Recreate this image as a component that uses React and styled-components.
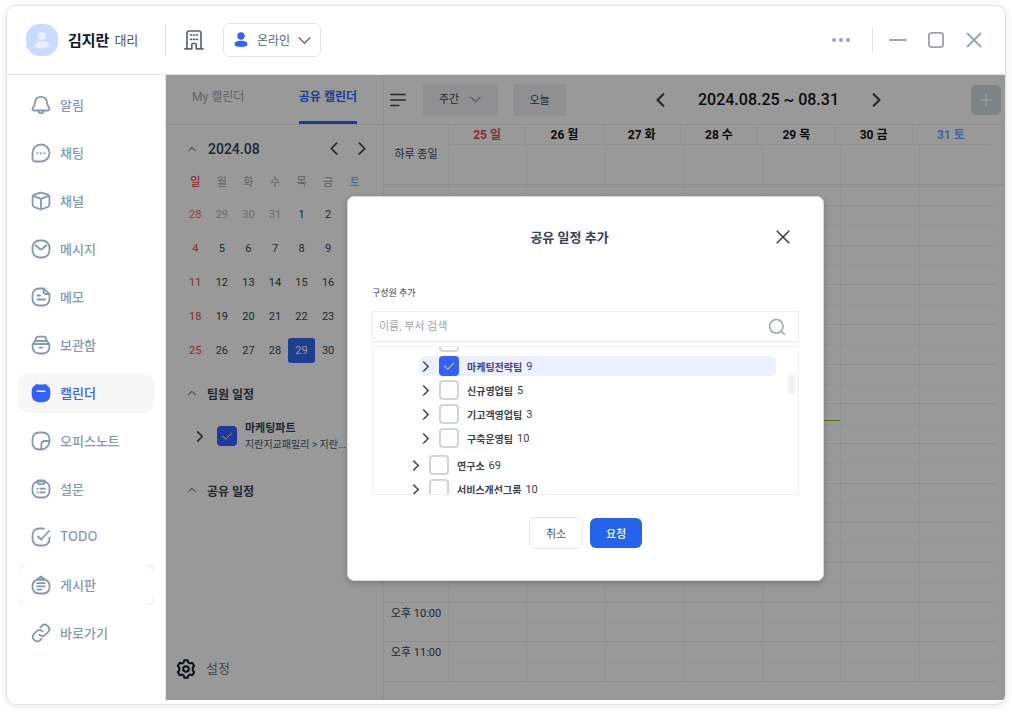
import React, { useState } from "react";
import styled, { createGlobalStyle } from "styled-components";

const NAV = [
  { id: "alarm", label: "알림" },
  { id: "chat", label: "채팅" },
  { id: "channel", label: "채널" },
  { id: "message", label: "메시지" },
  { id: "memo", label: "메모" },
  { id: "archive", label: "보관함" },
  { id: "calendar", label: "캘린더" },
  { id: "note", label: "오피스노트" },
  { id: "survey", label: "설문" },
  { id: "todo", label: "TODO" },
  { id: "board", label: "게시판", framed: true },
  { id: "link", label: "바로가기" },
];

const WEEKDAYS = ["일", "월", "화", "수", "목", "금", "토"];

const WEEKS = [
  [28, 29, 30, 31, 1, 2, 3],
  [4, 5, 6, 7, 8, 9, 10],
  [11, 12, 13, 14, 15, 16, 17],
  [18, 19, 20, 21, 22, 23, 24],
  [25, 26, 27, 28, 29, 30, 31],
];

const HOURS = [12, 1, 2, 3, 4, 5, 6, 7, 8, 9, 10, 11];

const TEAMS = [
  { id: "t0", depth: 1 },
  { id: "t1", name: "마케팅전략팀", count: 9, depth: 1 },
  { id: "t2", name: "신규영업팀", count: 5, depth: 1 },
  { id: "t3", name: "기고객영업팀", count: 3, depth: 1 },
  { id: "t4", name: "구축운영팀", count: 10, depth: 1 },
  { id: "t5", name: "연구소", count: 69, depth: 0, first: true },
  { id: "t6", name: "서비스개선그룹", count: 10, depth: 0 },
];

const dayColor = (i, base) => (i === 0 ? "#e5484d" : i === 6 ? "#6ea8ff" : base);

function NavIcon({ id }) {
  const shapes = {
    alarm: (
      <>
        <path d="M10 1.800c-3.400 0-5.600 2.500-5.900 5.600-.2 2.600-.9 3.700-2.100 5.200-1.100 1.400-.5 2.900 1.400 2.900h13.200c1.900 0 2.500-1.500 1.400-2.900-1.200-1.500-1.900-2.600-2.100-5.200C15.600 4.300 13.400 1.800 10 1.800z" />
        <path d="M7.500 15.800c.2 1.600 1.100 2.500 2.500 2.500s2.300-.9 2.500-2.500" />
      </>
    ),
    chat: (
      <>
        <path d="M10 1.500a8.500 8.500 0 1 1 0 17H4.300c-1.600 0-2.800-1.200-2.800-2.800V10A8.500 8.500 0 0 1 10 1.500z" />
        <path d="M6.500 10.200h.01M10 10.200h.01M13.500 10.200h.01" strokeWidth="2" />
      </>
    ),
    channel: (
      <>
        <path d="M8.600 1.900 3.300 3.700c-1.100.4-1.700 1.200-1.700 2.300v7.600c0 1.100.6 2 1.600 2.400l5.300 2c1 .4 2 .4 3 0l5.300-2c1-.4 1.600-1.300 1.600-2.400V6c0-1.100-.6-1.900-1.700-2.300l-5.300-1.800c-1-.3-1.900-.3-2.800 0z" />
        <path d="m2.300 4.800 7.700 3 7.700-3M10 7.800v10.400" />
      </>
    ),
    message: (
      <>
        <rect x="1.500" y="1.500" width="17" height="17" rx="7" />
        <path d="m4.600 6.200 4 3.500c.8.700 2 .7 2.800 0l4-3.500" />
      </>
    ),
    memo: (
      <>
        <path d="M12.500 1.500H8.500c-4.500 0-7 2.500-7 7v3c0 4.500 2.500 7 7 7h3c4.500 0 7-2.500 7-7V7.200z" />
        <path d="M12.500 1.700v2.800c0 1.700 1 2.700 2.700 2.700h3M6.500 8.500h2.500M6.500 12.500h7.500" />
      </>
    ),
    archive: (
      <>
        <path d="M1.600 9h16.800v2.500c0 4.500-2.400 7-7 7H8.600c-4.600 0-7-2.500-7-7z" />
        <path d="M2.600 8.500 3.800 6h12.400l1.200 2.500M4.500 5.500l.6-2.600c.2-.8.7-1.300 1.600-1.300h6.600c.9 0 1.400.5 1.600 1.300l.6 2.600M8.600 12.600h2.800" />
      </>
    ),
    note: (
      <>
        <path d="M18.500 10V8.500c0-4.500-2.500-7-7-7h-3c-4.500 0-7 2.500-7 7v3c0 4.500 2.500 7 7 7h1.600c4.600 0 8.400-3.900 8.400-8.500z" />
        <path d="M18.300 10h-4.500c-2.300 0-3.500 1.200-3.500 3.500v4.800" />
      </>
    ),
    survey: (
      <>
        <rect x="1.500" y="2.300" width="17" height="16.200" rx="6.500" />
        <path d="M6.300 2.300c0 2 .9 2.900 2.500 2.900h2.400c1.600 0 2.500-.9 2.500-2.900 0-.5-.3-.8-.8-.8H7.100c-.5 0-.8.3-.8.8zM6.300 9.600h.3M9.200 9.600h4.800M6.300 13.400h.3M9.200 13.400h4.800" />
      </>
    ),
    todo: (
      <>
        <path d="M13 1.700c-.5-.1-1-.2-1.500-.2h-3c-4.500 0-7 2.500-7 7v3c0 4.500 2.500 7 7 7h3c4.500 0 7-2.500 7-7v-1.200" />
        <path d="m6.800 9.300 3.400 3.200 7.800-8.500" />
      </>
    ),
    board: (
      <>
        <rect x="1.500" y="4.500" width="17" height="14" rx="6" />
        <path d="M6.200 4.500 10 1.500l3.800 3zM6.300 8.200h7.400M6.300 11.400h7.400M6.300 14.600h4" />
      </>
    ),
    link: (
      <>
        <path d="M8.300 11.700a4.400 4.400 0 0 0 6.200 0l2.600-2.700a4.400 4.400 0 0 0-6.200-6.200L9.400 4.300" />
        <path d="M11.700 8.300a4.400 4.400 0 0 0-6.200 0L2.900 11a4.400 4.400 0 0 0 6.200 6.200l1.500-1.500" />
      </>
    ),
  };

  if (id === "calendar") {
    return (
      <svg width="20" height="20" viewBox="0 0 20 20" aria-hidden="true">
        <path
          fill="#3360ff"
          d="M5.500.7c.5 0 .9.400.9.900h7.200a.9.9 0 0 1 1.800 0v.5c2.500.9 3.900 3.200 3.900 6.400v2.800c0 4.900-2.900 7.900-7.800 7.900h-3C3.600 19.200.7 16.200.7 11.300V8.500c0-3.200 1.400-5.500 3.900-6.400v-.5c0-.5.4-.9.9-.9z"
        />
        <path d="M6.200 8.200h7.600" stroke="#fff" strokeWidth="1.600" strokeLinecap="round" />
      </svg>
    );
  }
  return (
    <StrokeIcon width="20" height="20" viewBox="0 0 20 20" strokeWidth="1.800" aria-hidden="true">
      {shapes[id]}
    </StrokeIcon>
  );
}

function Chevron({ dir = "right", size = 12, weight = 2 }) {
  const d = {
    right: "M4 1l5 5-5 5",
    left: "M8 1L3 6l5 5",
    up: "M1 8.500l5-5 5 5",
    down: "M1 3.500l5 5 5-5",
  }[dir];
  return (
    <StrokeIcon width={size} height={size} viewBox="0 0 12 12" strokeWidth={weight} aria-hidden="true">
      <path d={d} />
    </StrokeIcon>
  );
}

function Check({ label, ...rest }) {
  return (
    <CheckWrap>
      <input type="checkbox" aria-label={label} {...rest} />
      <StrokeIcon width="12" height="12" viewBox="0 0 12 12" strokeWidth="1" aria-hidden="true">
        <path d="M1.500 6l3.200 3.300 6-6.300" />
      </StrokeIcon>
    </CheckWrap>
  );
}

function TopBar() {
  return (
    <Header>
      <Avatar viewBox="0 0 32 32" aria-hidden="true">
        <circle cx="16" cy="12" r="4" />
        <path d="M9 21.500c0-2.800 3-4.300 7-4.300s7 1.500 7 4.300c0 2-2.500 2.700-7 2.700s-7-.7-7-2.700z" />
      </Avatar>
      <Name>
        김지란 <span>대리</span>
      </Name>
      <Divider $h={32} />
      <PlainButton type="button" aria-label="조직도">
        <StrokeIcon width="20" height="20" viewBox="0 0 20 20" strokeWidth="1.700" aria-hidden="true">
          <path d="M3 18.800V3.200C3 1.800 3.800 1 5.200 1h9.600C16.200 1 17 1.800 17 3.200v15.600M.9 18.800h6.900v-4.500c0-.5.3-.8.8-.8h2.800c.5 0 .8.3.8.8v4.500h6.900" />
          <path d="M6.500 5h1M12.500 5h1M9.500 5h1M6.500 9.300h1M9.500 9.300h1M12.500 9.300h1" />
        </StrokeIcon>
      </PlainButton>
      <StatusBox>
        <svg width="14" height="16" viewBox="0 0 14 16" aria-hidden="true">
          <g fill="#3360ff">
            <circle cx="7" cy="4" r="3.700" />
            <path d="M.6 12c0-2.400 2.800-3.300 6.400-3.300s6.400.9 6.400 3.300c0 2.200-2.600 2.900-6.400 2.900S.6 14.200.6 12z" />
          </g>
        </svg>
        <select aria-label="상태" defaultValue="온라인">
          <option>온라인</option>
          <option>자리비움</option>
        </select>
        <Chevron dir="down" weight={1.200} size={13} />
      </StatusBox>
      <WindowButtons>
        <PlainButton type="button" aria-label="더보기">
          <svg width="18" height="4" viewBox="0 0 18 4" fill="currentColor" aria-hidden="true">
            <circle cx="2" cy="2" r="2" />
            <circle cx="9" cy="2" r="2" />
            <circle cx="16" cy="2" r="2" />
          </svg>
        </PlainButton>
        <Divider $h={24} />
        <PlainButton type="button" aria-label="최소화">
          <StrokeIcon width="18" height="18" viewBox="0 0 18 18" strokeWidth="1.800">
            <path d="M1 9h16" />
          </StrokeIcon>
        </PlainButton>
        <PlainButton type="button" aria-label="최대화">
          <StrokeIcon width="18" height="18" viewBox="0 0 18 18" strokeWidth="1.800">
            <rect x="1.900" y="1.900" width="14.200" height="14.200" rx="2.500" />
          </StrokeIcon>
        </PlainButton>
        <PlainButton type="button" aria-label="닫기">
          <StrokeIcon width="18" height="18" viewBox="0 0 18 18" strokeWidth="1.800">
            <path d="M2.500 2.500l13 13M15.500 2.500l-13 13" />
          </StrokeIcon>
        </PlainButton>
      </WindowButtons>
    </Header>
  );
}

function MiniCalendar() {
  return (
    <>
      <MiniHead>
        <Chevron dir="up" size={8} weight={1.500} />
        <strong>2024.08</strong>
        <PlainButton type="button" aria-label="이전 달">
          <Chevron dir="left" size={13} weight={1.600} />
        </PlainButton>
        <PlainButton type="button" aria-label="다음 달">
          <Chevron size={13} weight={1.600} />
        </PlainButton>
      </MiniHead>
      <MiniTable>
        <thead>
          <tr>
            {WEEKDAYS.map((d, i) => (
              <Weekday key={d} $color={dayColor(i, "#9ca3af")} $bold={i === 0}>
                {d}
              </Weekday>
            ))}
          </tr>
        </thead>
        <tbody>
          {WEEKS.map((week, w) => (
            <tr key={w}>
              {week.map((d, i) => {
                const prev = w === 0 && d > 20;
                return (
                  <Day key={d} $color={dayColor(i, "#374151")} $muted={prev} $today={w === 4 && d === 29}>
                    <span>{d}</span>
                  </Day>
                );
              })}
            </tr>
          ))}
        </tbody>
      </MiniTable>
    </>
  );
}

function SidePanel() {
  return (
    <Panel>
      <Tabs>
        <Tab type="button">My 캘린더</Tab>
        <Tab type="button" $active>
          공유 캘린더
        </Tab>
      </Tabs>
      <MiniCalendar />
      <SectionTitle $top={14}>
        <Chevron dir="up" size={8} weight={1.500} />
        팀원 일정
      </SectionTitle>
      <TeamRow>
        <Chevron size={11} weight={1.700} />
        <Check label="마케팅파트" defaultChecked />
        <TeamText>
          <strong>마케팅파트</strong>
          <span>지란지교패밀리 &gt; 지란...</span>
        </TeamText>
      </TeamRow>
      <SectionTitle $top={25}>
        <Chevron dir="up" size={8} weight={1.500} />
        공유 일정
      </SectionTitle>
      <Settings type="button">
        <StrokeIcon width="20" height="20" viewBox="0 0 20 20" strokeWidth="2" aria-hidden="true">
          <path d="M8.300 1.200h3.400l.6 2.300 1.700 1 2.300-.7 1.900 3.100-1.500 1.800v2.600l1.500 1.800-1.900 3.100-2.300-.7-1.700 1-.6 2.300H8.300l-.6-2.300-1.700-1-2.300.7-1.900-3.100 1.500-1.800V8.700L1.800 6.900l1.900-3.100 2.300.7 1.700-1z" />
          <circle cx="10" cy="10" r="2.800" />
        </StrokeIcon>
        설정
      </Settings>
    </Panel>
  );
}

function Schedule() {
  return (
    <Board>
      <Toolbar>
        <ToolGroup>
          <PlainButton type="button" aria-label="목록">
            <StrokeIcon width="16" height="14" viewBox="0 0 16 14" strokeWidth="1.500">
              <path d="M.8 1.500h14.400M.8 7h14.400M.8 12.500h8" />
            </StrokeIcon>
          </PlainButton>
          <RangeBox>
            <select aria-label="보기" defaultValue="주간">
              <option>주간</option>
              <option>월간</option>
            </select>
            <Chevron dir="down" size={11} weight={1.400} />
          </RangeBox>
          <TodayButton type="button">오늘</TodayButton>
        </ToolGroup>
        <DateNav>
          <PlainButton type="button" aria-label="이전 주">
            <Chevron dir="left" size={14} weight={1.800} />
          </PlainButton>
          <h1>2024.08.25 ~ 08.31</h1>
          <PlainButton type="button" aria-label="다음 주">
            <Chevron size={14} weight={1.800} />
          </PlainButton>
        </DateNav>
        <AddButton type="button" aria-label="일정 추가">
          <StrokeIcon width="14" height="14" viewBox="0 0 14 14" strokeWidth="1.400">
            <path d="M7 1.500v11M1.500 7h11" />
          </StrokeIcon>
        </AddButton>
      </Toolbar>
      <AllDay>
        <AllDayLabel>하루 종일</AllDayLabel>
        <div>
          <DayHeads>
            {WEEKDAYS.map((d, i) => (
              <DayHead key={d} $color={dayColor(i, "#111")}>
                {25 + i} {d}
              </DayHead>
            ))}
          </DayHeads>
          <AllDayCells>
            {WEEKDAYS.map((d) => (
              <Slot key={d} />
            ))}
          </AllDayCells>
        </div>
      </AllDay>
      <Hours>
        <HourRow $partial>
          <HourLabel />
          {WEEKDAYS.map((d) => (
            <Slot key={d} />
          ))}
        </HourRow>
        {HOURS.map((h) => (
          <HourRow key={h}>
            <HourLabel>오후 {h}:00</HourLabel>
            {WEEKDAYS.map((d, i) => (
              <Slot key={d} $split>
                {h === 5 && i === 4 && <NowLine />}
              </Slot>
            ))}
          </HourRow>
        ))}
      </Hours>
    </Board>
  );
}

function ShareDialog() {
  const [picked, setPicked] = useState(["t1"]);
  const toggle = (id) =>
    setPicked((p) => (p.includes(id) ? p.filter((v) => v !== id) : [...p, id]));

  return (
    <Backdrop>
      <Dialog role="dialog" aria-labelledby="share-title">
        <DialogHead>
          <h2 id="share-title">공유 일정 추가</h2>
          <PlainButton type="button" aria-label="닫기">
            <StrokeIcon width="14" height="14" viewBox="0 0 14 14" strokeWidth="1.600">
              <path d="M1.200 1.200l11.600 11.600M12.800 1.200L1.200 12.800" />
            </StrokeIcon>
          </PlainButton>
        </DialogHead>
        <FieldLabel htmlFor="member">구성원 추가</FieldLabel>
        <SearchBox>
          <input id="member" type="text" placeholder="이름, 부서 검색" />
          <StrokeIcon width="18" height="18" viewBox="0 0 18 18" strokeWidth="1.500" aria-hidden="true">
            <circle cx="8.300" cy="8.300" r="6.800" />
            <path d="M13.300 13.300l3.200 3.200" />
          </StrokeIcon>
        </SearchBox>
        <TreeBox>
          <Tree>
            {TEAMS.map((t) => (
              <TreeRow
                key={t.id}
                $depth={t.depth}
                $first={t.first}
                $leaf={!t.name}
                $on={picked.includes(t.id)}
              >
                {t.name && <Chevron size={11} weight={1.600} />}
                <Check
                  label={t.name || "팀"}
                  checked={picked.includes(t.id)}
                  onChange={() => toggle(t.id)}
                />
                {t.name && <strong>{t.name}</strong>}
                {t.name && <span>{t.count}</span>}
              </TreeRow>
            ))}
          </Tree>
          <Thumb />
        </TreeBox>
        <Actions>
          <ActionButton type="button">취소</ActionButton>
          <ActionButton type="button" $primary>
            요청
          </ActionButton>
        </Actions>
      </Dialog>
    </Backdrop>
  );
}

export default function App() {
  const [page, setPage] = useState("calendar");

  return (
    <Page>
      <GlobalStyle />
      <Window>
        <TopBar />
        <Body>
          <Nav>
            {NAV.map((item) => (
              <NavItem key={item.id} $framed={item.framed}>
                <NavLink
                  href={`#${item.id}`}
                  $active={page === item.id}
                  onClick={() => setPage(item.id)}
                >
                  <NavIcon id={item.id} />
                  <span>{item.label}</span>
                </NavLink>
              </NavItem>
            ))}
          </Nav>
          <Content>
            <SidePanel />
            <Schedule />
            <ShareDialog />
          </Content>
        </Body>
      </Window>
    </Page>
  );
}

const GlobalStyle = createGlobalStyle`
  * {
    box-sizing: border-box;
  }
  body {
    margin: 0;
    background: #fff;
    font-family: Roboto, "Noto Sans CJK KR", sans-serif;
    font-size: 11px;
    color: #374151;
    white-space: nowrap;
  }
  button, input, select {
    font: inherit;
    color: inherit;
  }
  svg {
    flex: none;
  }
`;

const StrokeIcon = styled.svg`
  display: block;
  fill: none;
  stroke: currentColor;
  stroke-linecap: round;
  stroke-linejoin: round;
`;

const PlainButton = styled.button`
  display: flex;
  padding: 0;
  border: 0;
  background: none;
  cursor: pointer;
`;

const Page = styled.div`
  display: flex;
  min-height: 100vh;
  padding: 5px 6px 7px;
`;

const Window = styled.div`
  flex: 1;
  display: flex;
  flex-direction: column;
  padding-bottom: 4px;
  border: 1px solid #e3e4e6;
  border-radius: 10px;
  overflow: hidden;
  box-shadow: 0 1px 6px rgba(0, 0, 0, 0.1);
`;

const Header = styled.header`
  display: flex;
  align-items: center;
  height: 69px;
  padding: 0 22px 0 19px;
  border-bottom: 1px solid #e5e7eb;
  color: #5b6678;
`;

const Avatar = styled.svg`
  width: 32px;
  height: 32px;
  border-radius: 14px;
  background: #c9dbff;
  fill: #e8f0ff;
`;

const Name = styled.div`
  display: flex;
  align-items: center;
  gap: 5px;
  width: 97px;
  margin-left: 10px;
  padding-bottom: 2px;
  font-size: 15px;
  font-weight: 700;
  color: #111827;

  span {
    font-size: 13px;
    font-weight: 400;
    color: #4b5563;
  }
`;

const Divider = styled.div`
  width: 1px;
  height: ${(p) => p.$h}px;
  margin-right: 18px;
  background: #e2e4e8;
`;

const StatusBox = styled.label`
  display: flex;
  align-items: center;
  width: 98px;
  height: 34px;
  margin-left: 19px;
  padding: 0 9px 0 10px;
  border: 1px solid #e2e4e8;
  border-radius: 6px;

  select {
    width: 41px;
    margin-left: 9px;
    padding: 2px 0 0;
    border: 0;
    background: none;
    appearance: none;
    font-size: 12px;
  }
`;

const WindowButtons = styled.div`
  display: flex;
  align-items: center;
  gap: 20px;
  margin-left: auto;
  color: #9aa3b5;

  ${Divider} {
    margin: 0 -4px 0 2px;
  }
`;

const Body = styled.div`
  flex: 1;
  display: flex;
`;

const Nav = styled.nav`
  display: flex;
  flex-direction: column;
  gap: 8px;
  width: 159px;
  padding: 10px 11px;
  border-right: 1px solid #e5e7eb;
`;

const NavItem = styled.div`
  background: ${(p) => (p.$framed ? "#f7f7f7" : "none")};
`;

const NavLink = styled.a`
  display: flex;
  align-items: center;
  gap: 9px;
  height: 40px;
  padding-left: 13px;
  border-radius: 12px;
  background: ${(p) => (p.$active ? "#f7f7f7" : "#fff")};
  color: ${(p) => (p.$active ? "#3360ff" : "#8299b2")};
  font-family: Inter, "Noto Sans CJK KR", sans-serif;
  font-size: 13px;
  font-weight: 500;
  text-decoration: none;

  span {
    padding-bottom: 2px;
  }
`;

const Content = styled.main`
  position: relative;
  flex: 1;
  display: flex;
  min-width: 0;
`;

const Panel = styled.section`
  display: flex;
  flex-direction: column;
  width: 218px;
  border-right: 1px solid #f0f0f1;
`;

const Tabs = styled.div`
  display: flex;
  justify-content: space-between;
  height: 50px;
  padding: 0 26px;
  border-bottom: 1px solid #f0f0f1;
`;

const Tab = styled.button`
  padding: 1px 0 3px;
  border: 0;
  border-bottom: 3px solid ${(p) => (p.$active ? "#3360ff" : "transparent")};
  background: none;
  font-size: 12px;
  font-weight: ${(p) => (p.$active ? 700 : 400)};
  line-height: 42px;
  color: ${(p) => (p.$active ? "#3360ff" : "#9ca3af")};
`;

const MiniHead = styled.div`
  display: flex;
  align-items: center;
  gap: 14px;
  height: 47px;
  padding: 0 15px 0 22px;

  strong {
    flex: 1;
    margin-left: -2px;
    font-size: 14px;
    font-weight: 500;
  }
`;

const MiniTable = styled.table`
  margin: 0 15px 0 16px;
  border-collapse: collapse;
  table-layout: fixed;
  text-align: center;
`;

const Weekday = styled.th`
  height: 25px;
  padding: 0 0 7px;
  font-size: 11px;
  font-weight: ${(p) => (p.$bold ? 500 : 400)};
  color: ${(p) => p.$color};
`;

const Day = styled.td`
  height: 34px;
  padding: 0;
  font-size: 11px;
  color: ${(p) => (p.$muted && p.$color === "#374151" ? "#9ca3af" : p.$color)};

  span {
    display: block;
    border-radius: 3px;
    line-height: 25px;
    background: ${(p) => (p.$today ? "#2f67f0" : "none")};
    color: ${(p) => (p.$today ? "#fff" : "inherit")};
    opacity: ${(p) => (p.$muted ? 0.8 : 1)};
  }
`;

const SectionTitle = styled.h3`
  display: flex;
  align-items: center;
  gap: 11px;
  height: 24px;
  margin: ${(p) => p.$top}px 0 0;
  padding-left: 22px;
  font-size: 12px;
  font-weight: 600;
`;

const TeamRow = styled.div`
  display: flex;
  align-items: center;
  margin-top: 14px;
  padding-left: 28px;
  gap: 8px;

  > label {
    margin-left: 4px;
  }
`;

const TeamText = styled.div`
  display: flex;
  flex-direction: column;
  padding-top: 2px;
  line-height: 16px;

  strong {
    font-weight: 600;
  }
  span {
    font-size: 10px;
    color: #4b5563;
  }
`;

const Settings = styled.button`
  display: flex;
  align-items: center;
  gap: 10px;
  margin-top: auto;
  padding: 0 10px 21px;
  border: 0;
  background: none;
  font-size: 13px;
  line-height: 20px;
  color: #6b7280;

  svg {
    color: #111827;
  }
`;

const CheckWrap = styled.label`
  display: grid;
  place-items: center;
  width: 20px;
  height: 20px;
  color: #fff;

  input,
  svg {
    grid-area: 1 / 1;
  }
  svg {
    pointer-events: none;
  }
  input {
    width: 20px;
    height: 20px;
    margin: 0;
    border: 2px solid #cfd5dd;
    border-radius: 4px;
    background: #fff;
    appearance: none;
  }
  input:checked {
    border-color: #3360ff;
    background: #3360ff;
  }
`;

const Board = styled.section`
  flex: 1;
  display: flex;
  flex-direction: column;
  min-width: 0;
  padding-bottom: 18px;
`;

const Toolbar = styled.div`
  display: flex;
  align-items: center;
  justify-content: space-between;
  height: 50px;
  padding: 0 4px 0 6px;
  border-bottom: 1px solid #f0f0f1;
`;

const ToolGroup = styled.div`
  display: flex;
  align-items: center;
`;

const RangeBox = styled.label`
  display: flex;
  align-items: center;
  width: 75px;
  height: 32px;
  margin: 0 15px 0 17px;
  padding: 0 17px 0 16px;
  border-radius: 3px;
  background: #f1f1f5;

  select {
    flex: 1;
    width: 20px;
    padding: 0;
    border: 0;
    background: none;
    appearance: none;
  }
  svg {
    color: #9ca3af;
  }
`;

const TodayButton = styled.button`
  width: 53px;
  height: 32px;
  padding: 0 0 2px;
  border: 0;
  border-radius: 3px;
  background: #f1f1f5;
`;

const DateNav = styled.div`
  display: flex;
  align-items: center;
  gap: 30px;

  h1 {
    margin: 0;
    font-size: 16px;
    font-weight: 500;
    color: #111;
  }
`;

const AddButton = styled.button`
  display: grid;
  place-items: center;
  width: 30px;
  height: 30px;
  padding: 0;
  border: 0;
  border-radius: 5px;
  background: #d3dae0;
  color: #fff;
`;

const AllDay = styled.div`
  display: grid;
  grid-template-columns: 64px 1fr;
  height: 60px;
  border-bottom: 1px solid #f0f0f1;
`;

const AllDayLabel = styled.div`
  display: flex;
  align-items: center;
  justify-content: center;
  padding-bottom: 4px;
`;

const DayHeads = styled.div`
  display: grid;
  grid-template-columns: repeat(7, 1fr);
  height: 20px;
  margin-right: 16px;
  border-bottom: 1px solid #f3f3f4;
`;

const DayHead = styled.div`
  border-left: 1px solid #f3f3f4;
  text-align: center;
  font-size: 12px;
  font-weight: 700;
  line-height: 20px;
  color: ${(p) => p.$color};
`;

const AllDayCells = styled.div`
  display: grid;
  grid-template-columns: repeat(7, 1fr);
  height: 39px;
  margin-right: 8px;
`;

const Hours = styled.div`
  flex: 1;
  display: flex;
  flex-direction: column;
  margin: 1px 8px 0 0;
  border-bottom: 1px solid #f0f0f1;
`;

const HourRow = styled.div`
  flex: ${(p) => (p.$partial ? "0 0 19px" : "1")};
  display: grid;
  grid-template-columns: 64px repeat(7, 1fr);
  border-top: 1px solid #f0f0f1;
`;

const HourLabel = styled.div`
  text-align: center;
  line-height: 21px;
`;

const Slot = styled.div`
  position: relative;
  display: grid;
  grid-template-rows: 1fr 1fr;
  border-left: 1px solid #f3f3f4;

  &::after {
    content: "";
    grid-row: 2;
    border-top: ${(p) => (p.$split ? "1px solid #f8f8f9" : "0")};
  }
`;

const NowLine = styled.div`
  position: absolute;
  top: 40%;
  left: 0;
  right: 0;
  border-top: 1px solid #7cc414;
`;

const Backdrop = styled.div`
  position: absolute;
  inset: 0;
  display: flex;
  align-items: center;
  justify-content: center;
  padding-top: 2px;
  background: rgba(0, 0, 0, 0.4);
`;

const Dialog = styled.div`
  width: 477px;
  max-width: 96%;
  padding: 24px 24px 31px;
  border: 1px solid #d9d9d9;
  border-radius: 7px;
  background: #fff;
  box-shadow: 0 2px 6px rgba(0, 0, 0, 0.2);
`;

const DialogHead = styled.div`
  display: flex;
  align-items: center;
  height: 32px;
  padding-right: 9px;

  h2 {
    flex: 1;
    margin: 0;
    padding: 0 9px 2px 0;
    text-align: center;
    font-size: 13px;
    font-weight: 600;
  }
`;

const FieldLabel = styled.label`
  display: block;
  margin: 32px 0 10px;
  font-size: 9px;
  line-height: 16px;
`;

const SearchBox = styled.div`
  display: flex;
  align-items: center;
  height: 31px;
  margin-bottom: 4px;
  padding: 0 12px 0 6px;
  border: 1px solid #ececee;
  box-shadow: 0 1px 2px rgba(0, 0, 0, 0.03);
  color: #9ca3af;

  input {
    flex: 1;
    padding: 0;
    border: 0;
    outline: 0;
    color: #374151;
  }
  input::placeholder {
    color: #9ca3af;
  }
`;

const TreeBox = styled.div`
  position: relative;
  height: 149px;
  border: 1px solid #f1f1f3;
  overflow: hidden;
`;

/* list is scrolled part-way through its first row */
const Tree = styled.div`
  display: flex;
  flex-direction: column;
  gap: 4px;
  margin-top: -15px;
`;

const TreeRow = styled.div`
  display: flex;
  align-items: center;
  flex: none;
  height: 20px;
  margin: ${(p) => (p.$first ? 3 : 0)}px 22px 0 ${(p) => (p.$depth ? 47 : 37)}px;
  padding-left: ${(p) => (p.$leaf ? 11 : 0)}px;
  border-radius: 6px;
  background: ${(p) => (p.$on ? "#ecf0ff" : "none")};
  color: ${(p) => (p.$on ? "#3d3a94" : "#374151")};

  label {
    margin: 0 8px;
  }
  strong {
    margin-right: 4px;
    font-size: 10px;
    font-weight: 600;
  }
`;

const Thumb = styled.div`
  position: absolute;
  top: 28px;
  right: 3px;
  width: 7px;
  height: 19px;
  border-radius: 1px;
  background: #f1f2f4;
`;

const Actions = styled.div`
  display: flex;
  align-items: center;
  justify-content: center;
  gap: 7px;
  margin-top: 22px;
`;

const ActionButton = styled.button`
  width: ${(p) => (p.$primary ? 52 : 54)}px;
  height: ${(p) => (p.$primary ? 30 : 32)}px;
  padding: 0;
  border: ${(p) => (p.$primary ? "0" : "1px solid #e5e7eb")};
  border-radius: 6px;
  background: ${(p) => (p.$primary ? "#2563eb" : "#fff")};
  color: ${(p) => (p.$primary ? "#fff" : "#4b5563")};
  font-weight: ${(p) => (p.$primary ? 500 : 400)};
`;
